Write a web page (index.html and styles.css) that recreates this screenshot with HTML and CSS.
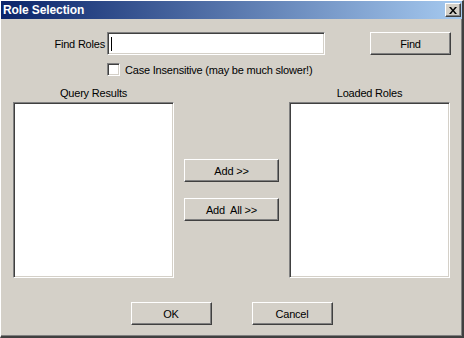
FILE: index.html
```html
<!DOCTYPE html>
<html lang="en">

<head>
    <meta charset="UTF-8">
    <title>Role Selection</title>
    <link rel="stylesheet" href="styles.css">
</head>

<body>

    <div class="window">
        <div class="titlebar">
            <span class="title">Role Selection</span>
            <div class="close-btn">
                <svg width="8" height="7" viewBox="0 0 8 7">
                    <path d="M0 0h2l2 2.5 2-2.5h2l-3 3.5 3 3.5h-2l-2-2.5-2 2.5h-2l3-3.5z" fill="#000"/>
                </svg>
            </div>
        </div>

        <div class="find-row">
            <label class="find-label">Find Roles</label>
            <div class="textbox"><span class="caret"></span></div>
            <div class="btn">Find</div>
        </div>

        <div class="check-row">
            <span class="checkbox"></span>
            <span>Case Insensitive (may be much slower!)</span>
        </div>

        <div class="lists">
            <div class="list-col">
                <div class="list-title">Query Results</div>
                <div class="listbox"></div>
            </div>
            <div class="middle">
                <div class="btn wide">Add &gt;&gt;</div>
                <div class="btn wide">Add&nbsp; All &gt;&gt;</div>
            </div>
            <div class="list-col">
                <div class="list-title">Loaded Roles</div>
                <div class="listbox"></div>
            </div>
        </div>

        <div class="footer">
            <div class="btn">OK</div>
            <div class="btn">Cancel</div>
        </div>
    </div>

</body>

</html>
```

FILE: styles.css
```css
* {
    box-sizing: border-box;
    margin: 0;
    padding: 0;
}

body {
    font-family: "Liberation Sans", Arial, sans-serif;
    font-size: 11px;
    letter-spacing: -0.2px;
    color: #000;
    background: #d4d0c8;
}

.window {
    width: 464px;
    height: 338px;
    background: #d4d0c8;
    border-top: 1px solid #fff;
    border-left: 1px solid #fff;
    border-right: 2px solid #404040;
    border-bottom: 2px solid #404040;
    box-shadow: inset -1px -1px #808080;
    display: flex;
    flex-direction: column;
}

.titlebar {
    height: 18px;
    background: linear-gradient(to right, #0a246a, #a6caf0);
    display: flex;
    align-items: center;
    justify-content: space-between;
    padding: 0 1px 0 2px;
}

.title {
    color: #fff;
    font-weight: bold;
    font-size: 12px;
    letter-spacing: -0.1px;
}

.close-btn {
    width: 16px;
    height: 14px;
    background: #d4d0c8;
    border: 1px solid;
    border-color: #fff #404040 #404040 #fff;
    box-shadow: inset -1px -1px #808080;
    display: flex;
    align-items: center;
    justify-content: center;
}

.btn {
    width: 81px;
    height: 23px;
    background: #d4d0c8;
    border: 1px solid;
    border-color: #fff #404040 #404040 #fff;
    box-shadow: inset -1px -1px #808080;
    display: flex;
    align-items: center;
    justify-content: center;
}

.btn.wide {
    width: 95px;
}

.find-row {
    display: flex;
    align-items: center;
    margin-top: 13px;
}

.find-label {
    width: 104px;
    text-align: right;
    margin-right: 2px;
}

.textbox {
    width: 218px;
    height: 23px;
    background: #fff;
    border: 1px solid;
    border-color: #808080 #fff #fff #808080;
    box-shadow: inset 1px 1px #404040, inset -1px -1px #d4d0c8;
    margin-right: 45px;
    display: flex;
    align-items: center;
    padding-left: 3px;
}

.caret {
    width: 1px;
    height: 14px;
    background: #000;
}

.check-row {
    display: flex;
    align-items: center;
    gap: 5px;
    margin-top: 8px;
    padding-left: 106px;
    height: 13px;
}

.checkbox {
    width: 13px;
    height: 13px;
    background: #fff;
    border: 1px solid;
    border-color: #808080 #fff #fff #808080;
    box-shadow: inset 1px 1px #404040, inset -1px -1px #d4d0c8;
}

.lists {
    display: grid;
    grid-template-columns: 161px 95px 161px;
    column-gap: 10px;
    padding-left: 12px;
    margin-top: 9px;
}

.list-title {
    height: 17px;
    line-height: 17px;
    text-align: center;
}

.listbox {
    height: 176px;
    background: #fff;
    border: 1px solid;
    border-color: #808080 #fff #fff #808080;
    box-shadow: inset 1px 1px #404040, inset -1px -1px #d4d0c8;
}

.middle {
    display: flex;
    flex-direction: column;
    gap: 16px;
    padding-top: 74px;
}

.footer {
    display: flex;
    justify-content: center;
    gap: 40px;
    margin-top: 24px;
}
```
